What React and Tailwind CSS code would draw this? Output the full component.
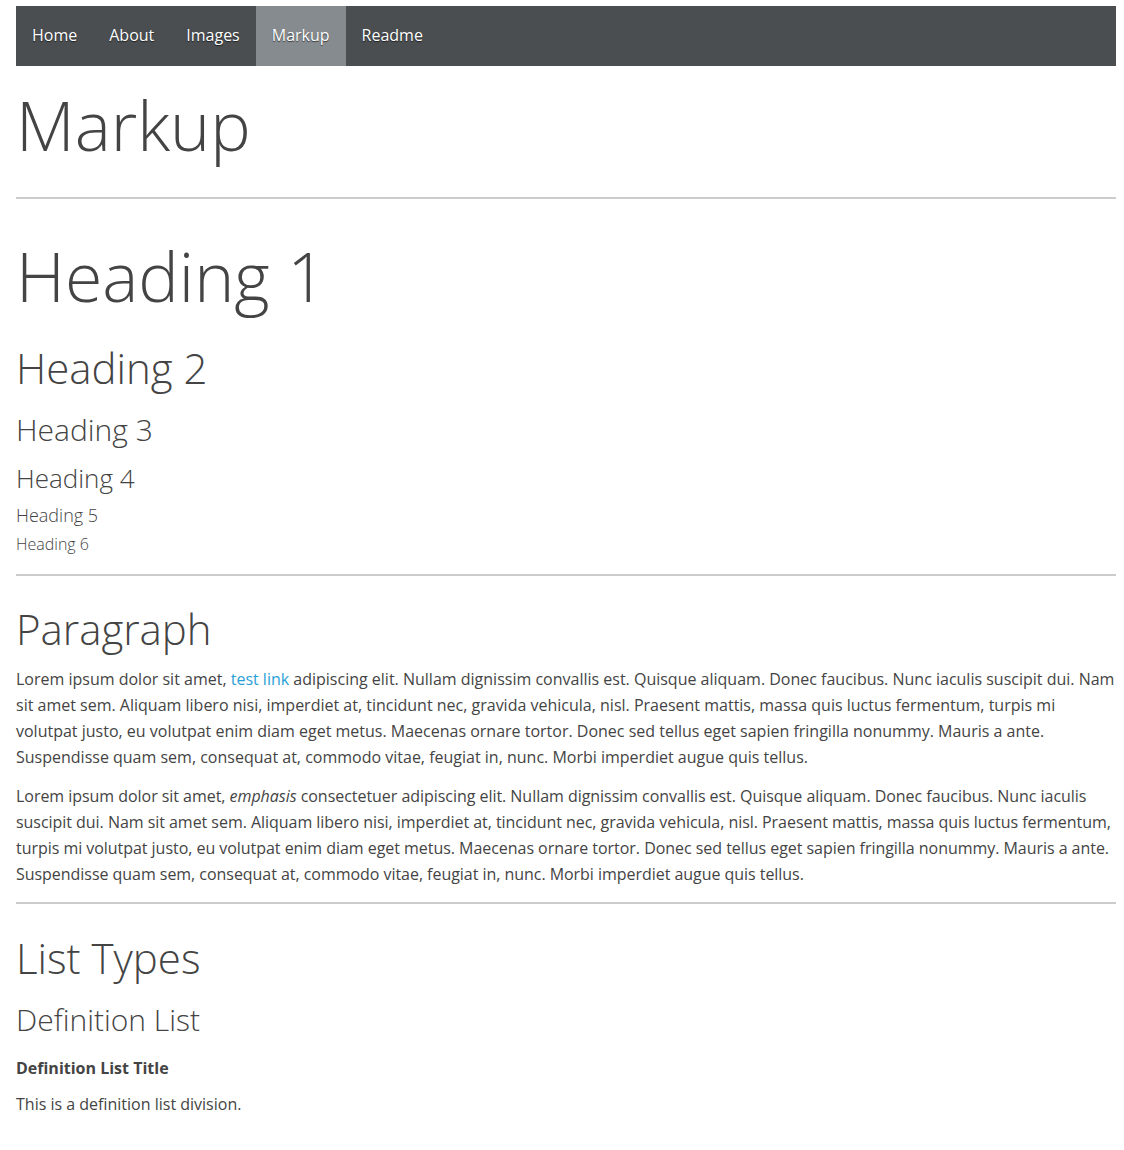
const navItems = ['Home', 'About', 'Images', 'Markup', 'Readme'];

const App = () => {
  return (
    <div className="min-h-screen bg-white pl-4 pr-2 pt-[6px] pb-10 font-['Open_Sans',sans-serif] text-[#444]">
      {/* Nav */}
      <nav className="flex h-[60px] bg-[#4a4e51]">
        {navItems.map((item) => (
          <a
            key={item}
            href="#"
            className={`flex items-center px-4 pb-[2px] text-[16px] text-white [text-shadow:0_1px_1px_rgba(0,0,0,0.6)] ${
              item === 'Markup' ? 'bg-[#868b90]' : ''
            }`}
          >
            {item}
          </a>
        ))}
      </nav>

      <h1 className="mt-[25px] text-[68px] leading-[68px] font-light">Markup</h1>
      <hr className="mt-[38px] border-0 h-[2px] bg-[#ccc]" />

      {/* Headings */}
      <h1 className="mt-[43px] text-[68px] leading-[68px] font-light">Heading 1</h1>
      <h2 className="mt-[37px] text-[42px] leading-[42px] font-light">Heading 2</h2>
      <h3 className="mt-[26px] text-[30px] leading-[30px] font-light">Heading 3</h3>
      <h4 className="mt-[20px] text-[26px] leading-[26px] font-light">Heading 4</h4>
      <h5 className="mt-[15px] text-[18px] leading-[18px] font-light">Heading 5</h5>
      <h6 className="mt-[12px] text-[16px] leading-[16px] font-light">Heading 6</h6>
      <hr className="mt-[22px] border-0 h-[2px] bg-[#ccc]" />

      {/* Paragraph */}
      <h2 className="mt-[32px] text-[42px] leading-[42px] font-light">Paragraph</h2>
      <p className="mt-[16px] text-[16px] leading-[26px]">
        Lorem ipsum dolor sit amet, <a href="#" className="text-[#2a9fd6]">test link</a> adipiscing elit. Nullam dignissim
        convallis est. Quisque aliquam. Donec faucibus. Nunc iaculis suscipit dui. Nam sit amet sem. Aliquam libero nisi,
        imperdiet at, tincidunt nec, gravida vehicula, nisl. Praesent mattis, massa quis luctus fermentum, turpis mi
        volutpat justo, eu volutpat enim diam eget metus. Maecenas ornare tortor. Donec sed tellus eget sapien fringilla
        nonummy. Mauris a ante. Suspendisse quam sem, consequat at, commodo vitae, feugiat in, nunc. Morbi imperdiet augue
        quis tellus.
      </p>
      <p className="mt-[13px] text-[16px] leading-[26px] tracking-[-0.04px]">
        Lorem ipsum dolor sit amet, <em>emphasis</em> consectetuer adipiscing elit. Nullam dignissim convallis est.
        Quisque aliquam. Donec faucibus. Nunc iaculis suscipit dui. Nam sit amet sem. Aliquam libero nisi, imperdiet at,
        tincidunt nec, gravida vehicula, nisl. Praesent mattis, massa quis luctus fermentum, turpis mi volutpat justo, eu
        volutpat enim diam eget metus. Maecenas ornare tortor. Donec sed tellus eget sapien fringilla nonummy. Mauris a
        ante. Suspendisse quam sem, consequat at, commodo vitae, feugiat in, nunc. Morbi imperdiet augue quis tellus.
      </p>
      <hr className="mt-[15px] border-0 h-[2px] bg-[#ccc]" />

      {/* Lists */}
      <h2 className="mt-[33px] text-[42px] leading-[42px] font-light">List Types</h2>
      <h3 className="mt-[26px] text-[30px] leading-[30px] font-light">Definition List</h3>
      <dl>
        <dt className="mt-[20px] text-[16px] leading-[26px] font-bold">Definition List Title</dt>
        <dd className="mt-[10px] text-[16px] leading-[26px]">This is a definition list division.</dd>
      </dl>
    </div>
  );
};

export default App;
